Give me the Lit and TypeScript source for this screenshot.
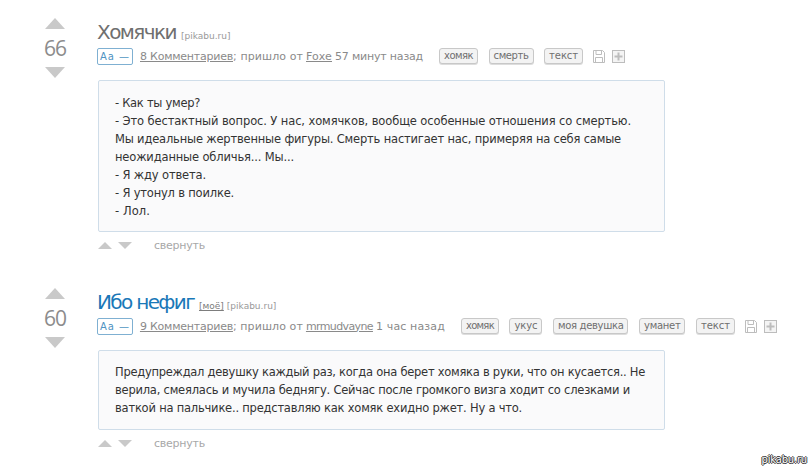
import { LitElement, html, css } from "lit";
import { customElement } from "lit/decorators.js";

const FAMILY = '"DejaVu Sans"';
const ctx = document.createElement("canvas").getContext("2d")!;

/** Letter-spacing that brings a text to the width it has in the design. */
const fit = (text: string, size: number, width: number) => {
  ctx.font = `${size}px ${FAMILY}`;
  const ls = (width - ctx.measureText(text).width) / text.length;
  return `letter-spacing:${ls.toFixed(3)}px`;
};

const up = (w: number, h: number) =>
  html`<svg class="tri" width=${w} height=${h} viewBox="0 0 20 11" preserveAspectRatio="none"><path d="M10 0L20 11H0Z" fill="#c9c9c9"/></svg>`;
const down = (w: number, h: number) =>
  html`<svg class="tri" width=${w} height=${h} viewBox="0 0 20 11" preserveAspectRatio="none"><path d="M0 0H20L10 11Z" fill="#c9c9c9"/></svg>`;

const saveIcon = html`<svg width="12" height="13" viewBox="0 0 12 13" fill="none" stroke="#bdbdbd"><path d="M.5.5H9.5L11.5 2.5V12.5H.5Z"/><path d="M3 .5V4.5H8.5V.5M2.5 12.5V7.5H9.5V12.5"/></svg>`;
const plusIcon = html`<svg width="13" height="13" viewBox="0 0 13 13"><rect x=".5" y=".5" width="12" height="12" fill="#f4f4f4" stroke="#bdbdbd"/><path d="M6.5 2.5V10.5M2.5 6.5H10.5" stroke="#bdbdbd" stroke-width="2"/></svg>`;

type Fit = [string, number];

interface Post {
  score: string;
  title: Fit;
  titleCls: string;
  mine: boolean;
  comments: string;
  author: Fit;
  time: Fit;
  tags: Fit[];
  lines: Fit[];
  boxCls: string;
}

const posts: Post[] = [
  {
    score: "66",
    title: ["Хомячки", 79],
    titleCls: "dark",
    mine: false,
    comments: "8 Комментариев",
    author: ["Foxe", 26],
    time: ["57 минут назад", 88],
    tags: [["хомяк", 29], ["смерть", 35], ["текст", 29]],
    lines: [
      ["- Как ты умер?", 85],
      ["- Это бестактный вопрос. У нас, хомячков, вообще особенные отношения со смертью.", 516],
      ["Мы идеальные жертвенные фигуры. Смерть настигает нас, примеряя на себя самые", 506],
      ["неожиданные обличья... Мы...", 179],
      ["- Я жду ответа.", 91],
      ["- Я утонул в поилке.", 119],
      ["- Лол.", 35],
    ],
    boxCls: "first",
  },
  {
    score: "60",
    title: ["Ибо нефиг", 97],
    titleCls: "blue",
    mine: true,
    comments: "9 Комментариев",
    author: ["mrmudvayne", 67],
    time: ["1 час назад", 69],
    tags: [["хомяк", 28], ["укус", 23], ["моя девушка", 65.5], ["уманет", 36.5], ["текст", 29]],
    lines: [
      ["Предупреждал девушку каждый раз, когда она берет хомяка в руки, что он кусается.. Не", 530],
      ["верила, смеялась и мучила беднягу. Сейчас после громкого визга ходит со слезками и", 515],
      ["ваткой на пальчике.. представляю как хомяк ехидно ржет. Ну а что.", 407],
    ],
    boxCls: "second",
  },
];

@customElement("app-root")
export class AppRoot extends LitElement {
  static styles = css`
    :host {
      display: block;
      position: relative;
      width: 812px;
      height: 469px;
      overflow: hidden;
      background: #fff;
      font-family: "DejaVu Sans", sans-serif;
      font-size: 11.5px;
      color: #8a8a8a;
      box-sizing: border-box;
      padding-top: 18px;
    }
    svg { display: block; flex: none; }
    .post { display: flex; padding-left: 45px; }
    .post + .post { margin-top: 36px; }
    .vote {
      width: 20px;
      margin-right: 32px;
      display: flex;
      flex-direction: column;
      align-items: center;
      flex: none;
    }
    .score {
      height: 38px;
      display: flex;
      align-items: center;
      justify-content: center;
      font-family: "Open Sans", sans-serif;
      font-size: 21px;
      letter-spacing: -1px;
      color: #8c8c8c;
    }
    .main { flex: none; width: 680px; }
    .title-row {
      display: flex;
      align-items: baseline;
      height: 29px;
      gap: 5px;
      white-space: nowrap;
    }
    .title { font-size: 20px; line-height: 28px; }
    .title.dark { color: #6f6f6f; }
    .title.blue { color: #1a78b8; }
    .src { font-size: 9px; color: #999; }
    .mine { font-size: 9px; color: #7d7d7d; text-decoration: underline; margin-right: -2px; }
    .meta {
      display: flex;
      align-items: center;
      height: 18px;
      white-space: nowrap;
      font-size: 11px;
    }
    .aa {
      box-sizing: border-box;
      width: 36px;
      height: 17px;
      border: 1px solid #7fb0d2;
      border-radius: 2px;
      color: #4f93c2;
      font-size: 10px;
      letter-spacing: 1px;
      display: flex;
      align-items: center;
      justify-content: center;
      margin-right: 7px;
    }
    .meta .link { color: #8a8a8a; text-decoration: underline; }
    .meta .sep { margin-right: 3px; }
    .meta .author { margin-right: 3px; }
    .tags { display: flex; gap: 10.5px; margin-left: 16px; }
    .tag {
      box-sizing: border-box;
      height: 16px;
      padding: 0 4px;
      border: 1px solid #c8c8c8;
      border-radius: 3px;
      background: #f3f3f3;
      font-size: 10px;
      line-height: 14px;
      color: #6f6f6f;
      box-shadow: 0 1px 0 #dddddd;
    }
    .icons { display: flex; align-items: center; gap: 7px; margin-left: 10px; }
    .box {
      box-sizing: border-box;
      width: 567px;
      margin-left: 1px;
      margin-top: 15px;
      border: 1px solid #cfdde9;
      border-radius: 2px;
      background: #fafafb;
      color: #333;
      line-height: 18px;
      white-space: nowrap;
      padding: 13px 16px;
    }
    .box.first { height: 152px; }
    .box.second { height: 80px; padding-top: 12px; }
    .foot {
      display: flex;
      align-items: center;
      height: 14px;
      margin-top: 6px;
      margin-left: 1px;
      gap: 6px;
      color: #a8a8a8;
      font-size: 11px;
    }
    .foot .fold { margin-left: 16px; }
    .mark {
      position: absolute;
      right: 5px;
      bottom: 4px;
      font-size: 10px;
      color: #fff;
      letter-spacing: -0.2px;
      text-shadow: 1px 0 0 #333, -1px 0 0 #333, 0 1px 0 #333, 0 -1px 0 #333;
    }
  `;

  private renderPost(p: Post) {
    return html`<div class="post">
      <div class="vote">
        ${up(20, 11)}
        <div class="score">${p.score}</div>
        ${down(20, 11)}
      </div>
      <div class="main">
        <div class="title-row">
          <span class="title ${p.titleCls}" style=${fit(p.title[0], 20, p.title[1])}>${p.title[0]}</span>
          ${p.mine ? html`<span class="mine">[моё]</span>` : ""}
          <span class="src">[pikabu.ru]</span>
        </div>
        <div class="meta">
          <span class="aa">Аа —</span>
          <span class="link" style=${fit(p.comments, 11, 93)}>${p.comments}</span>
          <span class="sep" style=${fit("; пришло от", 11, 70)}>; пришло от</span>
          <span class="link author" style=${fit(p.author[0], 11, p.author[1])}>${p.author[0]}</span>
          <span style=${fit(p.time[0], 11, p.time[1])}>${p.time[0]}</span>
          <div class="tags">
            ${p.tags.map(([t, w]) => html`<span class="tag" style=${fit(t, 10, w)}>${t}</span>`)}
          </div>
          <div class="icons">${saveIcon}${plusIcon}</div>
        </div>
        <div class="box ${p.boxCls}">
          ${p.lines.map(([l, w]) => html`<div style=${fit(l, 11.5, w)}>${l}</div>`)}
        </div>
        <div class="foot">
          ${up(14, 7)}${down(14, 7)}
          <span class="fold" style=${fit("свернуть", 11, 51)}>свернуть</span>
        </div>
      </div>
    </div>`;
  }

  render() {
    return html`${posts.map((p) => this.renderPost(p))}<div class="mark">pikabu.ru</div>`;
  }
}
